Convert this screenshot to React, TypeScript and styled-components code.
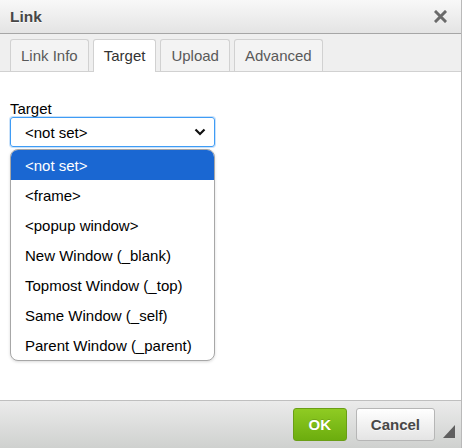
import React from "react";
import styled, { createGlobalStyle } from "styled-components";

const Global = createGlobalStyle`
  html, body { margin: 0; padding: 0; background: #fff; }
  body { font-family: "Liberation Sans", Arial, sans-serif; }
`;

const Dialog = styled.div`
  position: relative;
  width: 461px;
  height: 448px;
  border-right: 1px solid #b9b9b9;
  display: flex;
  flex-direction: column;
  background: #fff;
  overflow: hidden;
`;

const TitleBar = styled.div`
  height: 33px;
  flex: none;
  display: flex;
  align-items: center;
  justify-content: space-between;
  padding: 0 14px 0 10px;
  background: linear-gradient(to bottom, #f8f8f8, #e4e4e4);
  border-bottom: 1px solid #a6a6a6;
  font-weight: bold;
  font-size: 15.5px;
  color: #474747;
  text-shadow: 0 1px 0 rgba(255, 255, 255, 0.75);
`;

const CloseIcon = styled.svg`
  width: 13px;
  height: 13px;
  display: block;
`;

const TabStrip = styled.div`
  height: 37px;
  flex: none;
  display: flex;
  align-items: flex-end;
  gap: 4px;
  padding: 0 10px;
  background: #efefef;
  border-bottom: 1px solid #d1d1d1;
`;

const Tab = styled.div<{ $active?: boolean }>`
  box-sizing: border-box;
  display: flex;
  align-items: center;
  padding: 0 10px;
  font-size: 15px;
  color: ${(p) => (p.$active ? "#333" : "#595959")};
  background: ${(p) => (p.$active ? "#fff" : "#f3f3f3")};
  border: 1px solid #d1d1d1;
  border-bottom: none;
  border-radius: 3px 3px 0 0;
  margin-bottom: ${(p) => (p.$active ? "-1px" : "0")};
  height: ${(p) => (p.$active ? "33px" : "32px")};
  padding-bottom: 1px;
`;

const Content = styled.div`
  flex: 1;
  padding: 28px 10px 0 10px;
  background: #fff;
`;

const Field = styled.div`
  position: relative;
  width: 205px;
  display: flex;
  flex-direction: column;
`;

const Label = styled.label`
  font-size: 15px;
  line-height: 17px;
  color: #000;
`;

const Select = styled.div`
  height: 30px;
  box-sizing: border-box;
  display: flex;
  align-items: center;
  justify-content: space-between;
  padding: 0 8px 0 14px;
  border: 1px solid #3f9cf5;
  box-shadow: 0 0 0 1px rgba(80, 160, 240, 0.3);
  border-radius: 3px;
  font-size: 15px;
  color: #000;
`;

const Chevron = styled.svg`
  width: 12px;
  height: 8px;
  display: block;
`;

const Dropdown = styled.ul`
  position: absolute;
  left: 0;
  top: 49px;
  width: 205px;
  box-sizing: border-box;
  margin: 0;
  padding: 0;
  list-style: none;
  background: #fff;
  border: 1px solid #a7a7a7;
  border-radius: 8px;
  overflow: hidden;
  box-shadow: 0 1px 3px rgba(0, 0, 0, 0.15);
`;

const Option = styled.li<{ $selected?: boolean }>`
  height: 30px;
  display: flex;
  align-items: center;
  padding-left: 14px;
  font-size: 15px;
  color: ${(p) => (p.$selected ? "#fff" : "#000")};
  background: ${(p) => (p.$selected ? "#1a67d2" : "transparent")};
`;

const Footer = styled.div`
  height: 48px;
  flex: none;
  display: flex;
  justify-content: flex-end;
  align-items: flex-start;
  gap: 9px;
  padding: 7px 26px 0 0;
  box-sizing: border-box;
  background: linear-gradient(to bottom, #ebebeb, #cfd1cf);
  border-top: 1px solid #bfbfbf;
`;

const Button = styled.button<{ $primary?: boolean }>`
  height: 33px;
  box-sizing: border-box;
  padding: 0 ${(p) => (p.$primary ? "12px" : "14px")};
  min-width: ${(p) => (p.$primary ? "54px" : "78px")};
  border-radius: 3px;
  font-family: "Liberation Sans", Arial, sans-serif;
  font-weight: bold;
  font-size: 15px;
  cursor: pointer;
  color: ${(p) => (p.$primary ? "#fff" : "#474747")};
  border: 1px solid ${(p) => (p.$primary ? "#6a9e15" : "#b6b6b6")};
  background: ${(p) =>
    p.$primary
      ? "linear-gradient(to bottom, #8fcb23, #6cad0e)"
      : "linear-gradient(to bottom, #ffffff, #e4e4e4)"};
  text-shadow: ${(p) =>
    p.$primary ? "0 -1px 0 rgba(0,0,0,0.15)" : "0 1px 0 rgba(255,255,255,0.5)"};
`;

const Grip = styled.svg`
  position: absolute;
  right: 6px;
  bottom: 10px;
  width: 12px;
  height: 13px;
`;

const options = [
  "<not set>",
  "<frame>",
  "<popup window>",
  "New Window (_blank)",
  "Topmost Window (_top)",
  "Same Window (_self)",
  "Parent Window (_parent)",
];

export default function App() {
  return (
    <>
      <Global />
      <Dialog>
        <TitleBar>
          <span>Link</span>
          <CloseIcon viewBox="0 0 13 13">
            <path d="M2 2 L11 11 M11 2 L2 11" stroke="#6a6a6a" strokeWidth="3" strokeLinecap="square" />
          </CloseIcon>
        </TitleBar>
        <TabStrip>
          <Tab>Link Info</Tab>
          <Tab $active>Target</Tab>
          <Tab>Upload</Tab>
          <Tab>Advanced</Tab>
        </TabStrip>
        <Content>
          <Field>
            <Label>Target</Label>
            <Select>
              <span>&lt;not set&gt;</span>
              <Chevron viewBox="0 0 12 8">
                <path d="M1.5 1.5 L6 6 L10.5 1.5" fill="none" stroke="#111" strokeWidth="2.2" />
              </Chevron>
            </Select>
            <Dropdown>
              {options.map((o, i) => (
                <Option key={o} $selected={i === 0}>
                  {o}
                </Option>
              ))}
            </Dropdown>
          </Field>
        </Content>
        <Footer>
          <Button $primary>OK</Button>
          <Button>Cancel</Button>
        </Footer>
        <Grip viewBox="0 0 12 13">
          <polygon points="12,0 12,13 0,13" fill="#5f5f5f" />
        </Grip>
      </Dialog>
    </>
  );
}
